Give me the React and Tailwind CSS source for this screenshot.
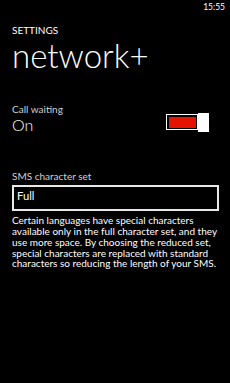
import React, { useState } from "react";

const font = { fontFamily: 'Lato, "Open Sans", sans-serif' };

const Toggle = ({ on, onChange }) => (
  <button
    type="button"
    onClick={() => onChange(!on)}
    className="flex items-center mt-[8.7px] mr-[10px]"
  >
    <span className="flex w-[32px] h-[16px] border-[1.5px] border-white p-[1.5px]">
      <span className={on ? "flex-1 bg-[#e51400]" : "flex-1 bg-black"} />
    </span>
    <span className="w-[11px] h-[19px] bg-white" />
  </button>
);

const App = () => {
  const [callWaiting, setCallWaiting] = useState(true);

  return (
    <div className="w-[230px] h-[383px] bg-black text-white overflow-hidden" style={font}>
      {/* status bar */}
      <div className="pt-[2.5px] pr-[5px] text-right text-[8.5px] leading-none">15:55</div>

      <div className="pl-[12px] pr-[11px]">
        <div className="mt-[14px] text-[10px] leading-none">SETTINGS</div>
        <h1 className="mt-[3.6px] text-[33px] leading-none font-light">network+</h1>

        {/* call waiting */}
        <div className="mt-[32.7px] flex justify-between items-start">
          <div>
            <div className="text-[10px] leading-none text-[#d0d0d0]">Call waiting</div>
            <div className="mt-[2.9px] text-[16px] leading-none font-light">{callWaiting ? "On" : "Off"}</div>
          </div>
          <Toggle on={callWaiting} onChange={setCallWaiting} />
        </div>

        {/* sms character set */}
        <div className="mt-[38.1px] text-[10px] leading-none text-[#d0d0d0]">SMS character set</div>
        <div className="mt-[4px] h-[26px] border-2 border-[#e8e8e8] pl-[3px] pt-[3px] text-[11.2px] leading-none">
          Full
        </div>
        <p className="mt-[4px] text-[10px] leading-[10.8px]">
          Certain languages have special characters available only in the full character set, and they use more space. By choosing the reduced set, special characters are replaced with standard characters so reducing the length of your SMS.
        </p>
      </div>
    </div>
  );
};

export default App;
